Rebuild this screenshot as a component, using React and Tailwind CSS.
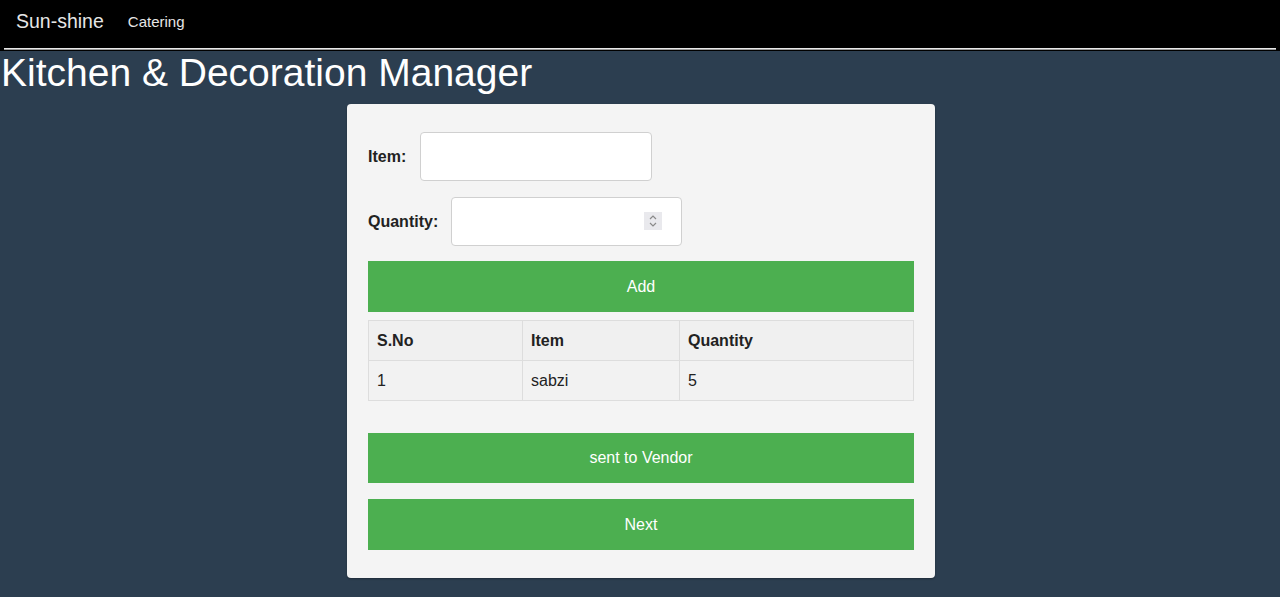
import { useState } from "react"

const ROWS = [{ sno: 1, item: "sabzi", qty: 5 }]

function GreenButton({ children, className = "" }) {
  return (
    <button
      className={`w-full bg-[#4caf50] text-white text-[16px] ${className}`}
    >
      {children}
    </button>
  )
}

export default function App() {
  const [item, setItem] = useState("")
  const [qty, setQty] = useState("")

  return (
    <div
      className="min-h-[597px] bg-[#2c3e50] pb-5"
      style={{ fontFamily: '"Liberation Sans", Arial, sans-serif' }}
    >
      {/* Top bar */}
      <nav className="h-12 bg-black flex items-center px-4 pb-[4px]">
        <span className="text-[19.5px] text-[#e6e6e6]">Sun-shine</span>
        <span className="text-[15px] text-[#e6e6e6] ml-[24px]">Catering</span>
      </nav>
      <div className="bg-black px-1 pb-[1px]">
        <div className="h-[2px] bg-[#e8e8e8] border-b border-[#9a9a9a]" />
      </div>

      <h1 className="text-[39px] leading-[44px] text-white pl-[1px]">
        Kitchen &amp; Decoration Manager
      </h1>

      {/* Form card */}
      <div className="relative left-[1px] mx-auto mt-[9px] w-[588px] bg-[#f4f4f4] rounded-[4px] px-[21px] pt-7 pb-7 shadow-[0_1px_2px_rgba(0,0,0,0.3)]">
        <div className="flex items-center gap-[14px]">
          <label className="font-bold text-[16px] text-[#222]">Item:</label>
          <input
            value={item}
            onChange={(e) => setItem(e.target.value)}
            className="w-[232px] h-[49px] bg-white border border-[#d0d0d0] rounded-[4px] px-2 outline-none"
          />
        </div>

        <div className="flex items-center gap-[13px] mt-4">
          <label className="font-bold text-[16px] text-[#222]">Quantity:</label>
          <div className="relative">
            <input
              value={qty}
              onChange={(e) => setQty(e.target.value)}
              className="w-[231px] h-[49px] bg-white border border-[#d0d0d0] rounded-[4px] px-2 outline-none"
            />
            {/* spinner */}
            <div className="absolute right-[20px] top-[15px] w-[18px] h-[18px] bg-[#e9e9ed] flex flex-col items-center justify-center">
              <svg width="10" height="14" viewBox="0 0 10 14" fill="none" stroke="#8a8a8a" strokeWidth="1.2">
                <path d="M2 5 L5 2 L8 5" />
                <path d="M2 9 L5 12 L8 9" />
              </svg>
            </div>
          </div>
        </div>

        <GreenButton className="h-[51px] mt-[15px]">Add</GreenButton>

        <table className="w-full mt-2 border-collapse text-[16px] text-[#222]">
          <thead>
            <tr className="bg-[#f0f0f0]">
              <th className="w-[154px] h-[40px] border border-[#dddddd] text-left px-2 font-bold">S.No</th>
              <th className="w-[157px] border border-[#dddddd] text-left px-2 font-bold">Item</th>
              <th className="border border-[#dddddd] text-left px-2 font-bold">Quantity</th>
            </tr>
          </thead>
          <tbody>
            {ROWS.map((r) => (
              <tr key={r.sno} className="bg-[#f2f2f2]">
                <td className="h-[40px] border border-[#dddddd] px-2">{r.sno}</td>
                <td className="border border-[#dddddd] px-2">{r.item}</td>
                <td className="border border-[#dddddd] px-2">{r.qty}</td>
              </tr>
            ))}
          </tbody>
        </table>

        <GreenButton className="h-[50px] mt-[32px]">sent to Vendor</GreenButton>
        <GreenButton className="h-[51px] mt-4">Next</GreenButton>
      </div>
    </div>
  )
}
